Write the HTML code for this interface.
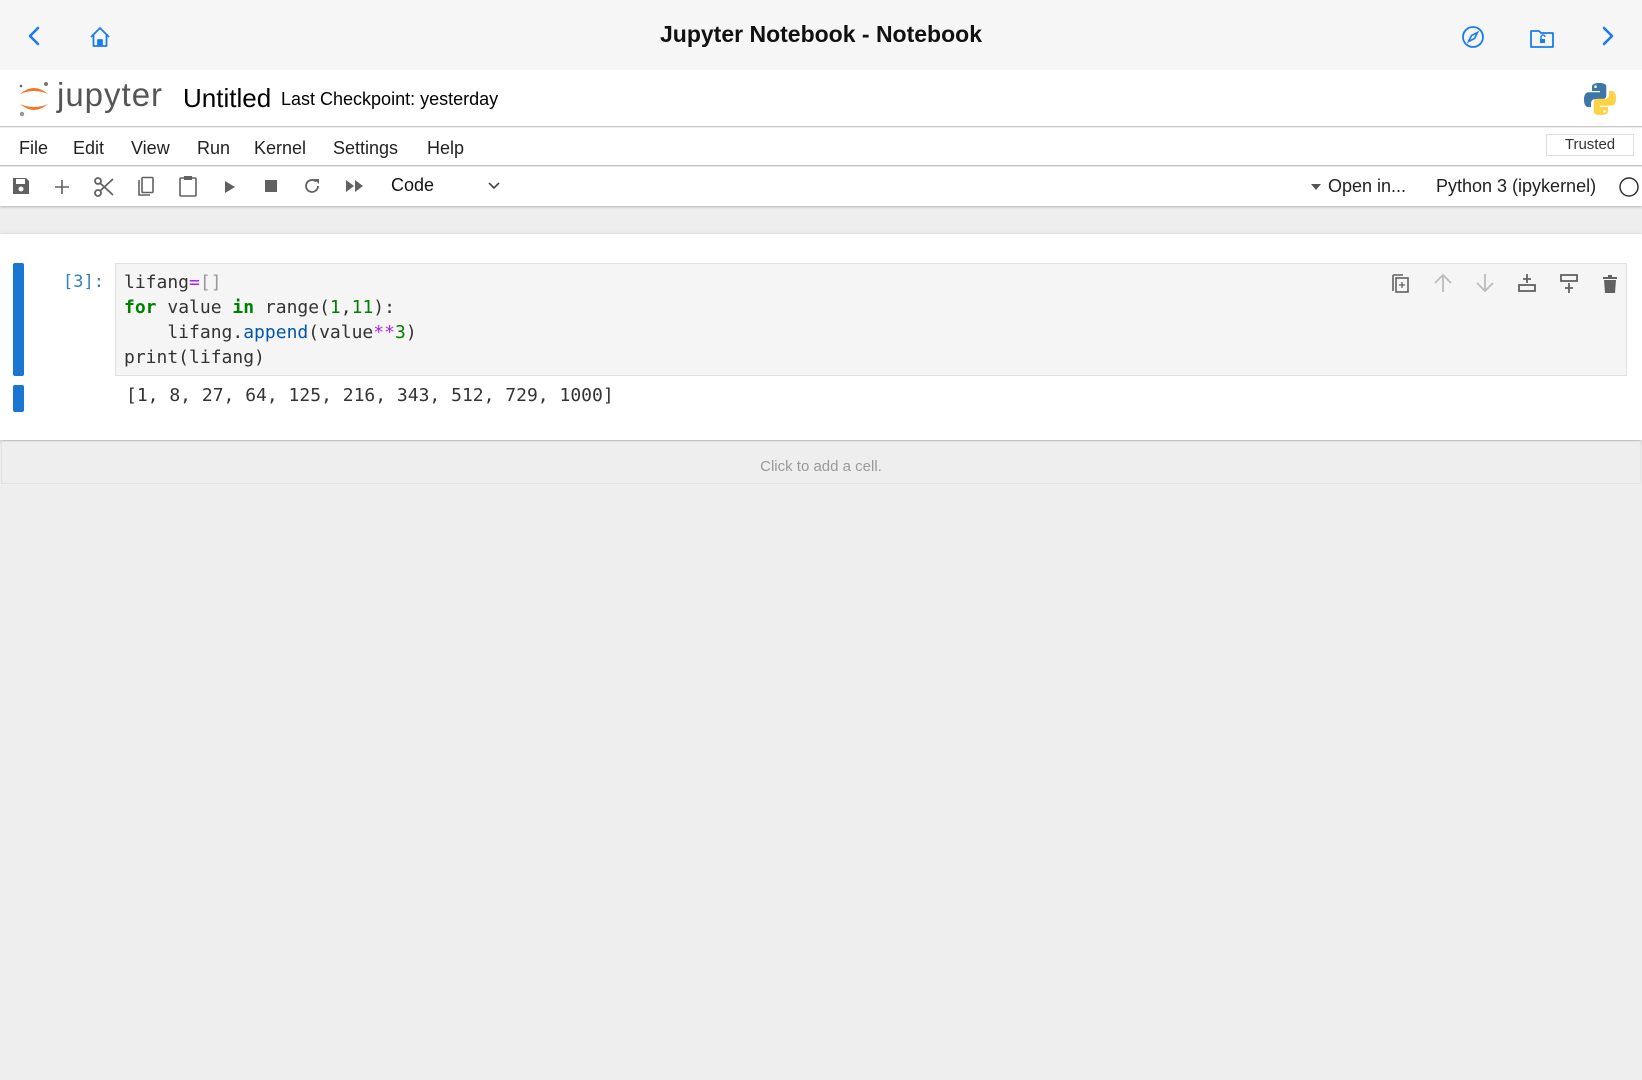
<!DOCTYPE html>
<html><head><meta charset="utf-8"><style>
*{margin:0;padding:0;box-sizing:border-box}
body{width:1642px;height:1080px;background:#eeeeee;font-family:"Liberation Sans",Arial,sans-serif;position:relative;overflow:hidden;color:#000}
.a{position:absolute}
.top{left:0;top:0;width:1642px;height:70px;background:#f6f6f6}
.title{left:0;width:1642px;top:21px;text-align:center;font-size:23px;font-weight:bold;color:#111}
.hdr{left:0;top:70px;width:1642px;height:57px;background:#fff;border-bottom:1px solid #c8c8c8}
.menu{left:0;top:128px;width:1642px;height:38px;background:#fff;border-bottom:1px solid #c8c8c8;font-size:18px;color:#222}
.menu span{position:absolute;top:10px}
.tb{left:0;top:167px;width:1642px;height:39px;background:#fff;box-shadow:0 1px 3px rgba(0,0,0,.25)}
.panel{left:0;top:234px;width:1642px;height:206px;background:#fff;box-shadow:0 2px 5px rgba(0,0,0,.25)}
.code{left:115px;top:263px;width:1512px;height:113px;background:#f5f5f5;border:1px solid #e0e0e0}
.mono{font-family:"DejaVu Sans Mono","Liberation Mono",monospace;font-size:18px;white-space:pre;color:#333}
.add{left:1px;top:441px;width:1640px;height:43px;border:1px solid #e2e2e2;background:#eeeeee;text-align:center;font-size:15px;color:#999;line-height:49px}
svg{position:absolute}
</style></head><body>
<div class="a top"></div>
<div class="a title">Jupyter Notebook - Notebook</div>
<svg style="left:26px;top:26px" width="18" height="20" viewBox="0 0 18 20"><path d="M12 2L4 10l8 8" fill="none" stroke="#1a7cf0" stroke-width="2.6" stroke-linecap="round" stroke-linejoin="round"/></svg>
<svg style="left:88px;top:25px" width="24" height="24" viewBox="0 0 24 24"><path d="M3 12L12 3l9 9M5.5 10v11h13V10M10 21v-6h4v6" fill="none" stroke="#1a7cf0" stroke-width="1.8" stroke-linejoin="round"/><rect x="10" y="15" width="4" height="6" fill="#1a7cf0"/></svg>
<svg style="left:1461px;top:25px" width="24" height="24" viewBox="0 0 24 24"><circle cx="12" cy="12" r="10" fill="none" stroke="#1a7cf0" stroke-width="1.8"/><path d="M16.5 7.5L13.5 13.5 7.5 16.5 10.5 10.5z" fill="none" stroke="#1a7cf0" stroke-width="1.6"/></svg>
<svg style="left:1529px;top:27px" width="26" height="22" viewBox="0 0 26 22"><path d="M2 4h8l2 2h12v14H2z" fill="none" stroke="#1a7cf0" stroke-width="1.8" stroke-linejoin="round"/><rect x="11" y="12" width="5" height="4" fill="#1a7cf0"/><path d="M12 12v-2a2 2 0 014 0" fill="none" stroke="#1a7cf0" stroke-width="1.4"/></svg>
<svg style="left:1598px;top:26px" width="18" height="20" viewBox="0 0 18 20"><path d="M6 2l8 8-8 8" fill="none" stroke="#1a7cf0" stroke-width="2.6" stroke-linecap="round" stroke-linejoin="round"/></svg>

<div class="a hdr"></div>
<svg style="left:16px;top:78px" width="36" height="42" viewBox="0 0 36 42"><path d="M4 16 Q18 4 32 16 Q18 10 4 16z" fill="#f37726"/><path d="M4 26 Q18 38 32 26 Q18 32 4 26z" fill="#f37726"/><circle cx="30" cy="6" r="2" fill="#767677"/><circle cx="6" cy="36" r="2.2" fill="#989798"/><circle cx="5" cy="8" r="1.3" fill="#616262"/></svg>
<div class="a" style="left:57px;top:76px;font-size:33px;color:#555;letter-spacing:1px">jupyter</div>
<div class="a" style="left:183px;top:83px;font-size:26px;color:#000">Untitled</div>
<div class="a" style="left:281px;top:89px;font-size:18px;color:#000">Last Checkpoint: yesterday</div>
<svg style="left:1582px;top:81px" width="36" height="36" viewBox="0 0 36 36"><path d="M17.5 2c-8 0-7.5 3.5-7.5 3.5V10h8v1.3H6.8S2 10.8 2 18.6s4.2 7.5 4.2 7.5H9v-3.700s-.2-4.2 4.1-4.2h7.2s4 .1 4-3.9V5.8S25 2 17.5 2zm-4 2.4a1.3 1.3 0 110 2.6 1.3 1.3 0 010-2.6z" fill="#3c77a8"/><path d="M18.5 34c8 0 7.5-3.5 7.5-3.5V26h-8v-1.3h11.2S34 25.2 34 17.4s-4.2-7.5-4.2-7.5H27v3.7s.2 4.2-4.1 4.2h-7.2s-4-.1-4 3.9v8.5S11 34 18.5 34zm4-2.4a1.3 1.3 0 110-2.6 1.3 1.3 0 010 2.6z" fill="#fdd448"/></svg>

<div class="a menu"><span style="left:19px">File</span><span style="left:73px">Edit</span><span style="left:131px">View</span><span style="left:197px">Run</span><span style="left:254px">Kernel</span><span style="left:333px">Settings</span><span style="left:427px">Help</span></div>
<div class="a" style="left:1546px;top:134px;width:88px;height:22px;border:1px solid #ddd;font-size:15px;color:#333;text-align:center;line-height:20px">Trusted</div>

<div class="a tb"></div>
<svg style="left:11px;top:176px" width="20" height="20" viewBox="0 0 20 20"><path d="M2 2h13l3 3v13H2z" fill="#616161"/><rect x="5" y="3" width="9" height="5" fill="#fff"/><circle cx="10" cy="13" r="2.5" fill="#fff"/></svg>
<svg style="left:52px;top:177px" width="20" height="20" viewBox="0 0 20 20"><path d="M10 3v14M3 10h14" stroke="#616161" stroke-width="1.6"/></svg>
<svg style="left:93px;top:176px" width="22" height="22" viewBox="0 0 22 22"><circle cx="5" cy="5" r="3" fill="none" stroke="#616161" stroke-width="1.8"/><circle cx="5" cy="17" r="3" fill="none" stroke="#616161" stroke-width="1.8"/><path d="M7 7l13 12M7 15L20 3" stroke="#616161" stroke-width="1.8"/></svg>
<svg style="left:136px;top:176px" width="20" height="22" viewBox="0 0 20 22"><path d="M3 4v15h11" fill="none" stroke="#616161" stroke-width="1.6"/><rect x="6" y="1.5" width="11" height="15" rx="1" fill="none" stroke="#616161" stroke-width="1.6"/></svg>
<svg style="left:178px;top:175px" width="20" height="22" viewBox="0 0 20 22"><rect x="2" y="3" width="16" height="18" rx="1" fill="none" stroke="#616161" stroke-width="1.6"/><rect x="6" y="1" width="8" height="4" fill="#616161"/></svg>
<svg style="left:222px;top:179px" width="16" height="16" viewBox="0 0 16 16"><path d="M3 2l10 6-10 6z" fill="#616161"/></svg>
<svg style="left:264px;top:179px" width="14" height="14"><rect x="1" y="1" width="12" height="12" fill="#616161"/></svg>
<svg style="left:302px;top:176px" width="20" height="20" viewBox="0 0 20 20"><path d="M16 10a6 6 0 11-2-4.5" fill="none" stroke="#616161" stroke-width="1.8"/><path d="M12 3h5v5z" fill="#616161"/></svg>
<svg style="left:345px;top:179px" width="20" height="14" viewBox="0 0 20 14"><path d="M1 1l8 6-8 6zM10 1l8 6-8 6z" fill="#616161"/></svg>
<div class="a" style="left:391px;top:175px;font-size:18px;color:#111">Code</div>
<svg style="left:487px;top:181px" width="14" height="10" viewBox="0 0 14 10"><path d="M2 2l5 5 5-5" fill="none" stroke="#444" stroke-width="1.6"/></svg>
<svg style="left:1311px;top:184px" width="10" height="6"><path d="M0 0h10L5 6z" fill="#555"/></svg>
<div class="a" style="left:1328px;top:176px;font-size:18px;color:#222">Open in...</div>
<div class="a" style="left:1436px;top:176px;font-size:18px;color:#222">Python 3 (ipykernel)</div>
<svg style="left:1618px;top:176px" width="22" height="22"><circle cx="11" cy="11" r="9" fill="none" stroke="#333" stroke-width="1.5"/></svg>

<div class="a panel"></div>
<div class="a" style="left:13px;top:263px;width:11px;height:113px;background:#1976d2;border-radius:2px"></div>
<div class="a" style="left:13px;top:385px;width:11px;height:27px;background:#1976d2;border-radius:2px"></div>
<div class="a mono" style="left:63px;top:272px;color:#307fc1;font-size:17px">[3]:</div>
<div class="a code"></div>
<div class="a mono" style="left:124px;top:270px;line-height:25px">lifang<span style="color:#aa22ff">=</span><span style="color:#999">[]</span>
<span style="color:#008000;font-weight:bold">for</span> value <span style="color:#008000;font-weight:bold">in</span> range(<span style="color:#008000">1</span>,<span style="color:#008000">11</span>):
    lifang.<span style="color:#0055aa">append</span>(value<span style="color:#aa22ff">**</span><span style="color:#008000">3</span>)
print(lifang)</div>
<div class="a mono" style="left:126px;top:385px">[1, 8, 27, 64, 125, 216, 343, 512, 729, 1000]</div>
<svg style="left:1391px;top:272px" width="240" height="22" viewBox="0 0 240 22">
<g fill="none" stroke="#616161" stroke-width="1.6"><path d="M2 3v16M2 3h10"/><rect x="5" y="6" width="12" height="14"/><path d="M11 10v6M8 13h6" stroke-width="1.3"/></g>
<g fill="none" stroke="#bdbdbd" stroke-width="1.8"><path d="M52 20V3M44 11l8-8 8 8"/><path d="M94 2v17M86 11l8 8 8-8"/></g>
<g fill="none" stroke="#616161" stroke-width="1.8"><rect x="128" y="13" width="16" height="6"/><path d="M136 2v9M132 7h8"/></g>
<g fill="none" stroke="#616161" stroke-width="1.8"><rect x="170" y="3" width="16" height="6"/><path d="M178 11v10M174 16h8"/></g>
<path d="M212 5h14v2h-14zM217 3h4v2h-4zM213 8h12l-1 13h-10z" fill="#616161"/>
</svg>
<div class="a add">Click to add a cell.</div>
</body></html>
